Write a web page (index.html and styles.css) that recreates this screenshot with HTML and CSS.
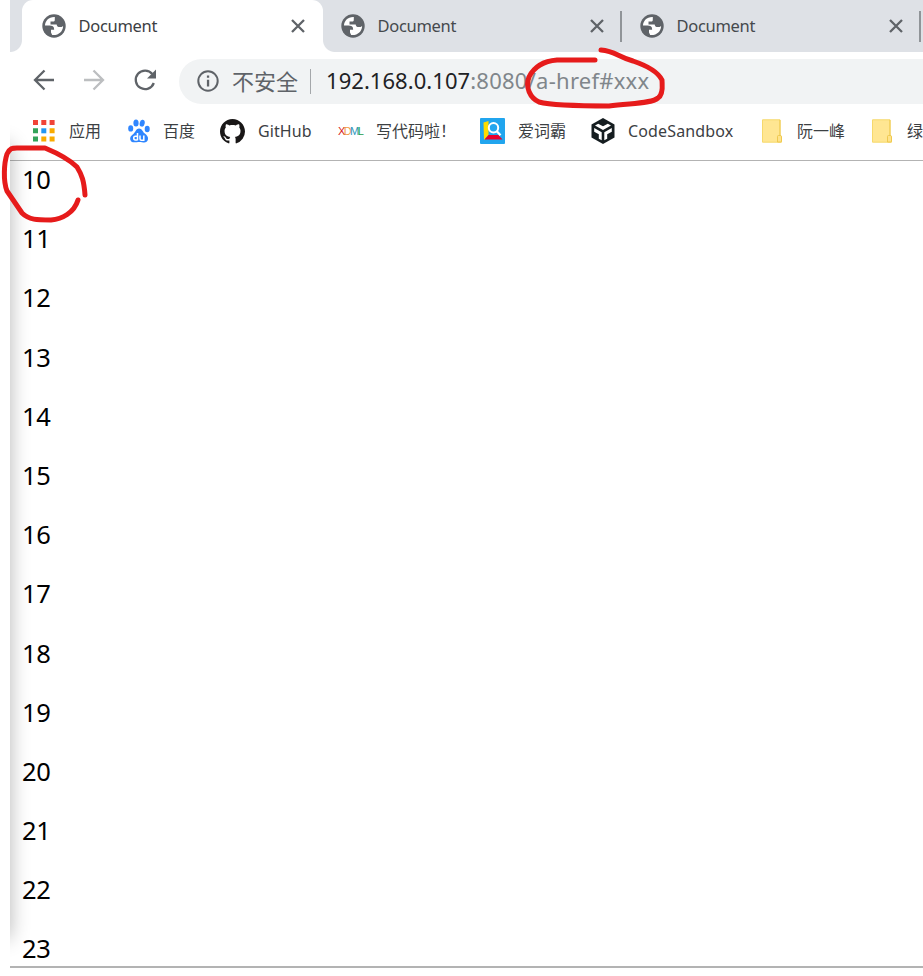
FILE: index.html
```html
<!DOCTYPE html>
<html lang="zh-CN">
<head>
<meta charset="utf-8">
<title>Document</title>
<link rel="stylesheet" href="styles.css">
</head>
<body>
<svg class="defs" width="0" height="0">
  <symbol id="globe" viewBox="0 0 24 24"><circle cx="12" cy="12" r="11.700" fill="#5f6368"/><path fill="#fff" d="M12.800 2.900C7 2.600 3 6.800 3 11.600h4.500c2.600 0 4.600.9 4.600 3.300v.9H9v2.700l1.200 2.400c6 .7 10.900-3.400 10.900-9-1 .9-1.900 1.200-3.100 1.200-2.200 0-3.300-1.100-3.300-2.700H8.500V7.500h2.800c1.800-.1 1.500-1.200 1.500-4.600z"/></symbol>
  <symbol id="close" viewBox="0 0 14 14"><path d="M1 1l12 12M13 1L1 13" stroke="#5f6368" stroke-width="2.300" fill="none"/></symbol>
  <symbol id="folder" viewBox="0 0 20 24"><path d="M.5.8h17.500v15.500l1.500 1.200v5.700H.5z" fill="#ffe692" stroke="#f6d96c"/><path d="M18 1v15.500h-1.500q-1 0-1 1V23h3q1 0 1-1v-4.500q0-1-1.500-1" fill="#ffe38a" stroke="#eec84f"/></symbol>
</svg>
<div class="browser">
  <div class="tabs">
    <div class="tab active"><svg class="globe"><use href="#globe"/></svg><span>Document</span><svg class="close"><use href="#close"/></svg></div>
    <div class="tab second"><svg class="globe"><use href="#globe"/></svg><span>Document</span><svg class="close"><use href="#close"/></svg></div>
    <div class="tab third"><svg class="globe"><use href="#globe"/></svg><span>Document</span><svg class="close"><use href="#close"/></svg></div>
  </div>
  <div class="toolbar">
    <svg class="nav" viewBox="0 0 24 24"><path d="M22 12H3M12.500 2.500L3 12l9.500 9.500"/></svg>
    <svg class="nav off" viewBox="0 0 24 24"><path d="M2 12h19M11.500 2.500L21 12l-9.500 9.500"/></svg>
    <svg class="nav" viewBox="0 0 24 24"><path d="M19.300 6A9.300 9.300 0 1 0 20.800 15"/><path class="solid" d="M23 1.500V10.500H14z"/></svg>
    <div class="address">
      <svg class="info" viewBox="0 0 22 22"><circle cx="11" cy="11" r="9.700" fill="none" stroke="#5f6368" stroke-width="2"/><path d="M9.900 5.500h2.300v2.300H9.900zM9.900 9.800h2.300v6.700H9.900z" fill="#5f6368"/></svg>
      <span class="unsafe">不安全</span>
      <span class="url">192.168.0.107<span class="path">:8080/a-href#xxx</span></span>
    </div>
  </div>
  <div class="bookmarks">
    <div class="bm apps"><i><svg width="22" height="22" viewBox="0 0 22 22"><path fill="#f04438" d="M0 0h5v5H0zM8.300 0h5v5h-5zM16.600 0h5v5h-5z"/><path fill="#33a35a" d="M0 8.300h5v5H0zM0 16.600h5v5H0z"/><path fill="#2196f3" d="M8.300 8.300h5v5h-5z"/><path fill="#f9ab00" d="M16.600 8.300h5v5h-5zM8.300 16.600h5v5h-5zM16.600 16.600h5v5h-5z"/></svg></i>应用</div>
    <div class="bm baidu"><i><svg width="22" height="24" viewBox="0 0 22 24"><g fill="#2f86ff"><ellipse cx="2.700" cy="9.400" rx="2.500" ry="3.200"/><ellipse cx="8" cy="4" rx="2.600" ry="3.500"/><ellipse cx="14.200" cy="4.200" rx="2.500" ry="3.500" transform="rotate(12 14.200 4.200)"/><ellipse cx="19.200" cy="10" rx="2.500" ry="3.200"/><path d="M11 9.500c3 0 3.600 3.200 5.500 4.800 2.200 1.800 4 3.300 3.500 5.900-.6 3.800-3.800 3.300-6 3-2-.3-3.500-.2-5.300 0-2.400.3-5.700.5-6.400-2.500-.7-3.200 1.700-4.400 3.500-6.200 1.700-1.800 2.600-5 5.200-5z"/></g><g fill="none" stroke="#fff" stroke-width="1.500"><path d="M9.500 14v7.200M9.500 17.200H7.400q-1.700 0-1.700 1.900t1.700 1.900h2.100M12 16.500v3.200q0 1.500 1.300 1.500h2.500v-4.700"/></g></svg></i>百度</div>
    <div class="bm github"><i><svg width="25" height="25" viewBox="0 0 16 16"><path fill="#191717" d="M8 0C3.580 0 0 3.580 0 8c0 3.540 2.290 6.530 5.470 7.590.4.070.55-.17.55-.38 0-.19-.01-.82-.01-1.490-2.010.37-2.530-.49-2.690-.94-.09-.23-.48-.94-.82-1.130-.28-.15-.68-.52-.01-.53.63-.01 1.080.58 1.230.82.72 1.210 1.870.87 2.330.66.070-.52.28-.87.51-1.070-1.780-.2-3.640-.89-3.640-3.950 0-.87.310-1.590.82-2.150-.08-.2-.36-1.020.08-2.120 0 0 .67-.21 2.200.82.64-.18 1.320-.27 2-.27s1.360.09 2 .27c1.530-1.040 2.200-.82 2.200-.82.44 1.100.16 1.920.08 2.120.51.56.82 1.270.82 2.150 0 3.070-1.870 3.750-3.650 3.950.29.25.54.73.54 1.480 0 1.070-.01 1.930-.01 2.200 0 .21.15.46.55.38A8.010 8.010 0 0 0 16 8c0-4.420-3.580-8-8-8z"/></svg></i>GitHub</div>
    <div class="bm xdml"><i class="logo"><b class="r">X</b><b class="o">D</b><b class="c">M</b><b class="g">L</b></i>写代码啦！</div>
    <div class="bm iciba"><i><svg width="25" height="26" viewBox="0 0 25 26"><rect width="25" height="26" rx="1" fill="#21a5ee"/><path fill="#ffdc00" d="M3.500 4.500L8.500 3v14l-4.500 5z"/><path fill="#e9002d" d="M8.500 17h10l4 4.500H4.500z"/><circle cx="13.500" cy="9.700" r="4.700" fill="#24a6ee" stroke="#fff" stroke-width="2"/><path d="M16.800 13.300l3.700 4" stroke="#fff" stroke-width="2.300"/></svg></i>爱词霸</div>
    <div class="bm sandbox"><i><svg width="24" height="26" viewBox="0 0 24 26"><path d="M12 0l11.500 6.500v13L12 26 .5 19.500v-13z" fill="#151d20"/><path fill="#fff" d="M7.200 5.700l4.800 2.600 4.800-2.600 3.200 1.800-8 4.600-8-4.600zM3.200 10l7.500 4.300v8l-2.900-1.600v-4.400l-4.600-2.500zM20.800 10l-7.500 4.300v8l2.900-1.600v-4.400l4.600-2.500z"/></svg></i>CodeSandbox</div>
    <div class="bm folder"><i><svg width="20" height="24"><use href="#folder"/></svg></i>阮一峰</div>
    <div class="bm last"><i><svg width="20" height="24"><use href="#folder"/></svg></i>绿</div>
  </div>
  <main class="page">
    <p>10</p><p>11</p><p>12</p><p>13</p><p>14</p><p>15</p><p>16</p><p>17</p><p>18</p><p>19</p><p>20</p><p>21</p><p>22</p><p>23</p>
  </main>
  <div class="shade"></div>
</div>
<svg class="ink" viewBox="0 0 923 976">
  <path d="M595 60H557C544 61 534 67 529 77C525 87 530 98 539 102C554 106 587 106 609 106C631 103 651 104 658 98C664 94 662 84 662 80C657 70 642 64 633 61C618 57 615 51 601 50"/>
  <path d="M78 200C74 213 62 219 51 220C37 220 29 220 22 213L7 191C3 181 4 163 7 154C10 148 12 148 17 148H45C57 153 70 160 77 167C82 175 84 181 85 195"/>
</svg>
</body>
</html>
```
FILE: styles.css
```css
* { box-sizing: border-box; }
body { margin: 0; width: 923px; height: 976px; overflow: hidden; background: #fff; font-family: "Noto Sans", "Noto Sans CJK SC", sans-serif; position: relative; }
.defs { position: absolute; }
.browser { position: relative; margin-left: 10px; width: 913px; height: 968px; overflow: hidden; border-bottom: 2px solid #b3b3b3; }
.tabs { display: flex; height: 52px; background: #dee1e6; padding-left: 12px; }
.tab { position: relative; display: flex; align-items: center; flex: 0 0 299px; padding-left: 18px; font-size: 16.500px; color: #45494d; }
.tab.active { flex-basis: 301px; padding-left: 20px; background: #fff; border-radius: 11px 11px 0 0; color: #3c4043; }
.tab.active::before, .tab.active::after { content: ""; position: absolute; bottom: 0; width: 12px; height: 12px; }
.tab.active::before { left: -12px; background: radial-gradient(circle at 0 0, #dee1e6 11.500px, #fff 12.500px); }
.tab.active::after { right: -12px; background: radial-gradient(circle at 100% 0, #dee1e6 11.500px, #fff 12.500px); }
.tab:not(.active)::after { content: ""; position: absolute; right: 0; top: 11px; width: 2px; height: 31px; background: #909498; }
.tab span { width: 212px; margin-left: 12.500px; margin-right: 0; letter-spacing: -.3px; line-height: 22px; }
.globe { width: 24px; height: 24px; flex: none; }
.close { width: 14px; height: 14px; flex: none; margin-top: -1px; }
.toolbar { display: flex; align-items: center; height: 58px; padding-left: 21.500px; }
.nav { width: 24px; height: 24px; margin-right: 26.500px; margin-top: -2px; flex: none; fill: none; stroke: #5f6368; stroke-width: 2.300; }
.nav.off { stroke: #bcbec0; }
.nav .solid { fill: #5f6368; stroke: none; }
.address { display: flex; align-items: center; flex: 1; height: 45px; margin-top: 1px; margin-left: -4px; padding-left: 17.500px; background: #f1f3f4; border-radius: 23px 0 0 23px; color: #202124; white-space: nowrap; }
.info { width: 22px; height: 22px; flex: none; margin-top: -1px; }
.unsafe { width: 79px; height: 25px; line-height: 25px; margin: -1px 15px 0 13.500px; border-right: 1px solid #a4a7aa; font-size: 22px; color: #5f6368; }
.url { font-size: 22px; line-height: 30px; margin-top: -4px; letter-spacing: .05px; }
.path { color: #80868b; letter-spacing: .25px; }
.bookmarks { display: flex; align-items: center; height: 51px; padding: 0 0 8px 23px; border-bottom: 1px solid #b3b3b3; white-space: nowrap; font-size: 16px; color: #3c4043; }
.bm { display: flex; align-items: center; flex: none; line-height: 24px; }
.bm i { display: flex; flex: none; width: 36px; }
.apps { width: 95px; }
.baidu { width: 92px; }
.github { width: 118px; letter-spacing: .1px; }
.xdml { width: 142px; }
.iciba { width: 111px; }
.sandbox { width: 171px; letter-spacing: .15px; }
.folder { width: 110px; }
.baidu i, .folder i, .last i { width: 35px; }
.github i, .xdml i, .iciba i { width: 38px; }
.sandbox i { width: 37px; }
.logo { font: normal 11px "Liberation Sans", sans-serif; letter-spacing: -1.600px; }
.logo b { font-weight: 400; }
.r { color: #d71920; } .o { color: #f19b3e; } .c { color: #2996bd; } .g { color: #249b4a; }
.page { padding: 0 0 0 12px; color: #000; font-size: 25.500px; }
.page p { margin: 0; height: 59.190px; line-height: 36px; letter-spacing: -.4px; }
.shade { position: absolute; left: -20px; top: 144px; width: 20px; height: 794px; box-shadow: 0 0 20px 0 rgba(0,0,0,.3); }
.ink { position: absolute; left: 0; top: 0; width: 923px; height: 976px; fill: none; stroke: #e61b1b; stroke-width: 5; stroke-linecap: round; stroke-linejoin: round; }
```
